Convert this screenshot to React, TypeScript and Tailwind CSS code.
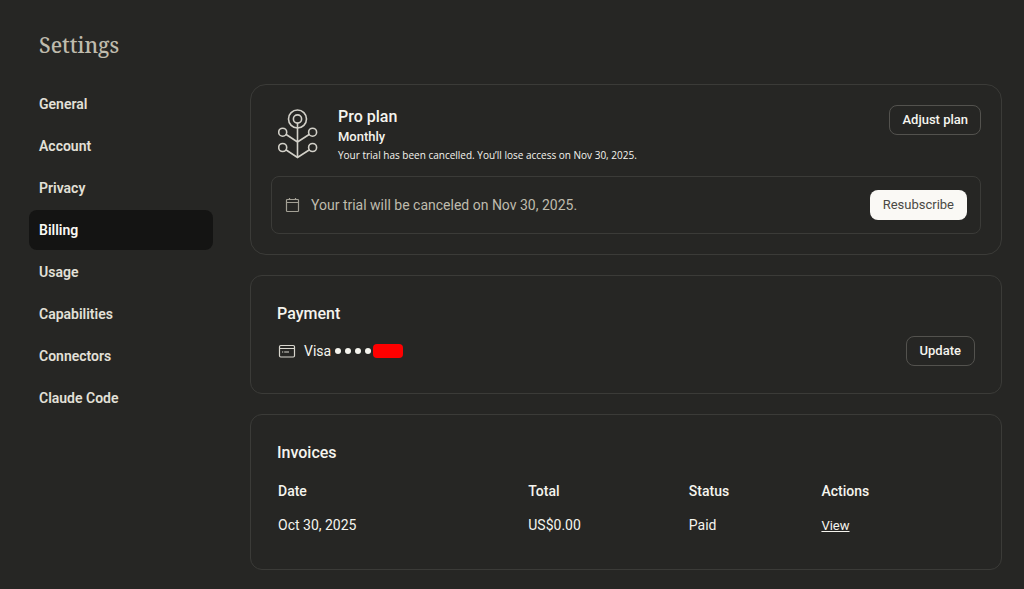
const navItems = ["General", "Account", "Privacy", "Billing", "Usage", "Capabilities", "Connectors", "Claude Code"]

const invoices = [
  { date: "Oct 30, 2025", total: "US$0.00", status: "Paid" },
]

function PlanIcon() {
  return (
    <svg className="w-10 h-[50px] shrink-0" viewBox="0 0 40 50" fill="none" stroke="#d2d0c8" strokeWidth="1.6" strokeLinecap="round" aria-hidden="true">
      <circle cx="19.5" cy="10" r="9" />
      <circle cx="19.5" cy="10" r="4.1" />
      <circle cx="4.7" cy="23.2" r="4" />
      <circle cx="34.6" cy="23.2" r="4" />
      <circle cx="4.7" cy="38.5" r="4" />
      <circle cx="34.6" cy="38.5" r="4" />
      <path d="M19.5 14.2V48.5M8.2 25.5L19.5 33L31.1 25.5M8.2 41L19.5 48.5L31.1 41" />
    </svg>
  )
}

function CalendarIcon() {
  return (
    <svg className="size-4 shrink-0" viewBox="0 0 16 16" fill="none" stroke="#a3a095" strokeWidth="1.2" aria-hidden="true">
      <rect x="1.5" y="2.5" width="12" height="12" rx="0.8" />
      <path d="M1.5 5.5H13.5M4.5 1V3M10.5 1V3" />
    </svg>
  )
}

function CardIcon() {
  return (
    <svg className="w-[18px] h-4 shrink-0" viewBox="0 0 18 16" fill="none" stroke="#d8d6ce" strokeWidth="1.2" aria-hidden="true">
      <rect x="1.5" y="2.5" width="15" height="11.5" rx="1.2" />
      <path d="M1.5 5.5H16.5M4 9H5.2M6.2 9H11" />
    </svg>
  )
}

export default function Settings() {
  return (
    <div className="min-h-screen bg-[#262624] text-[#f5f4ee] font-['Roboto',sans-serif] text-sm pt-8 pb-5 pl-[29px] pr-[22px]">
      <h1 className="font-['Noto_Serif','Liberation_Serif',serif] text-[21px] leading-[26px] font-medium text-[#bfbbad] pl-[10px]">Settings</h1>
      <div className="flex gap-[37px] mt-[26px]">
        <nav className="w-[184px] shrink-0">
          <ul className="flex flex-col gap-[2px]">
            {navItems.map((item) => (
              <li key={item}>
                <a
                  href="#"
                  aria-current={item === "Billing" ? "page" : undefined}
                  className={
                    item === "Billing"
                      ? "flex items-center h-10 px-[10px] rounded-lg bg-[#141413] font-semibold text-[#faf9f5]"
                      : "flex items-center h-10 px-[10px] rounded-lg font-semibold text-[#e2e0d8]"
                  }
                >
                  {item}
                </a>
              </li>
            ))}
          </ul>
        </nav>

        <main className="flex-1 min-w-0 flex flex-col gap-5">
          <section className="border border-[#3b3b38] rounded-2xl p-5">
            <div className="flex items-start">
              <div className="flex gap-5 pt-1 pl-[7px]">
                <PlanIcon />
                <div>
                  <h2 className="text-base leading-4 font-medium">Pro plan</h2>
                  <p className="text-[13px] leading-6 font-medium">Monthly</p>
                  <p className="font-['Open_Sans',sans-serif] text-[10px] leading-3 font-medium">Your trial has been cancelled. You’ll lose access on Nov 30, 2025.</p>
                </div>
              </div>
              <button type="button" className="ml-auto h-[30px] px-3 border border-[#53524e] rounded-lg text-[13px] font-medium">Adjust plan</button>
            </div>
            <div className="flex items-center gap-[10px] mt-[15px] h-[58px] px-[13px] border border-[#3b3b38] rounded-lg text-[#bfbbad]">
              <CalendarIcon />
              <p>Your trial will be canceled on Nov 30, 2025.</p>
              <button type="button" className="ml-auto h-[30px] px-[13px] rounded-lg bg-[#faf9f5] text-[13px] text-[#4a4944]">Resubscribe</button>
            </div>
          </section>

          <section className="border border-[#3b3b38] rounded-xl px-[26px] pt-7 pb-[27px]">
            <h2 className="text-base leading-5 font-medium">Payment</h2>
            <div className="flex items-center mt-3 pl-px">
              <CardIcon />
              <span className="ml-2">Visa</span>
              <span className="flex gap-1 ml-1" aria-label="card number hidden">
                <i className="size-[6px] rounded-full bg-[#f5f4ee]" />
                <i className="size-[6px] rounded-full bg-[#f5f4ee]" />
                <i className="size-[6px] rounded-full bg-[#f5f4ee]" />
                <i className="size-[6px] rounded-full bg-[#f5f4ee]" />
              </span>
              <span className="w-[30px] h-[14px] ml-[2px] rounded bg-[#ff0000]" />
              <button type="button" className="ml-auto h-[30px] px-[13px] border border-[#53524e] rounded-lg text-[13px] font-medium">Update</button>
            </div>
          </section>

          <section className="border border-[#3b3b38] rounded-xl px-[26px] py-7">
            <h2 className="text-base leading-5 font-medium">Invoices</h2>
            <table className="w-full mt-[10px] text-left table-fixed">
              <thead>
                <tr className="h-9">
                  <th className="w-[36%] pl-px font-medium">Date</th>
                  <th className="w-[23%] font-medium">Total</th>
                  <th className="w-[19%] font-medium">Status</th>
                  <th className="font-medium">Actions</th>
                </tr>
              </thead>
              <tbody>
                {invoices.map((invoice) => (
                  <tr key={invoice.date} className="h-8">
                    <td className="pl-px">{invoice.date}</td>
                    <td>{invoice.total}</td>
                    <td>{invoice.status}</td>
                    <td><a href="#" className="text-[13px] underline">View</a></td>
                  </tr>
                ))}
              </tbody>
            </table>
          </section>
        </main>
      </div>
    </div>
  )
}
